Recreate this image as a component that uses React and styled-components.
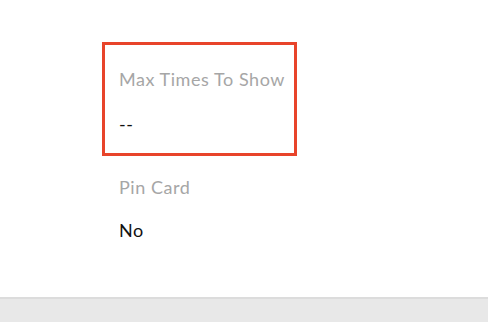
import React from "react";
import styled, { createGlobalStyle } from "styled-components";

const Global = createGlobalStyle`
  html, body { margin: 0; padding: 0; background: #fff; }
  body { font-family: Lato, "Noto Sans", sans-serif; }
`;

const Page = styled.div`
  width: 488px;
  height: 322px;
  display: flex;
  flex-direction: column;
  overflow: hidden;
`;

const Content = styled.div`
  flex: 1;
  display: flex;
  flex-direction: column;
  padding: 42px 0 0 102px;
`;

const Field = styled.div`
  width: 195px;
  box-sizing: border-box;
  padding: ${(p) => (p.$highlight ? "24px" : "18px")} 14px 19px 14px;
  border: 3px solid ${(p) => (p.$highlight ? "#e8442a" : "transparent")};
  display: flex;
  flex-direction: column;
  gap: ${(p) => (p.$highlight ? "25px" : "23px")};
`;

const Label = styled.div`
  font-size: 18px;
  line-height: 20px;
  letter-spacing: 0.55px;
  color: #a6a6a6;
  white-space: nowrap;
`;

const Value = styled.div`
  font-size: 18px;
  line-height: 20px;
  letter-spacing: 0.5px;
  color: #111;
`;

const Footer = styled.div`
  height: 23px;
  background: #e8e8e8;
  border-top: 2px solid #dcdcdc;
`;

export default function App() {
  return (
    <>
      <Global />
      <Page>
        <Content>
          <Field $highlight>
            <Label>Max Times To Show</Label>
            <Value>--</Value>
          </Field>
          <Field>
            <Label>Pin Card</Label>
            <Value>No</Value>
          </Field>
        </Content>
        <Footer />
      </Page>
    </>
  );
}
